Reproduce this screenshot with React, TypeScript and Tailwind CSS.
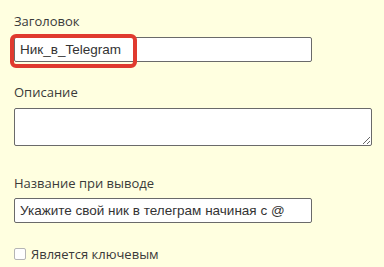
import React from "react";

export default function App() {
  const label = "block h-[16px] leading-[16px] text-[13px] text-[#3a3a3a] font-['Open_Sans',sans-serif]";
  const field =
    "block w-[298px] h-[25px] border border-[#6a6a6a] rounded-[2px] bg-white pl-[5px] pr-[4px] text-[13.5px] text-[#333] font-['Liberation_Sans',Arial,sans-serif] outline-none";
  return (
    <div className="w-[384px] h-[267px] bg-[#ffffe0] pl-[14px] pt-[13px] overflow-hidden">
      <label className={label}>Заголовок</label>
      <div className="relative mt-[8px]">
        <input className={field} defaultValue="Ник_в_Telegram" />
        <div className="absolute left-[-4px] top-[-3px] w-[127px] h-[34px] border-[4px] border-[#e03a2f] rounded-[6px] pointer-events-none" />
      </div>
      <label className={label + " mt-[22px]"}>Описание</label>
      <textarea className="block mt-[8px] w-[358px] h-[38px] border border-[#6a6a6a] rounded-[2px] bg-white outline-none" />
      <label className={label + " mt-[29px]"}>Название при выводе</label>
      <input
        className={field + " mt-[7px] w-[297px]"}
        defaultValue="Укажите свой ник в телеграм начиная с @"
      />
      <div className="mt-[25px] flex items-center gap-[5px] h-[12px]">
        <span className="block w-[12px] h-[12px] border border-[#b5b5b5] rounded-[2px] bg-white" />
        <span className="text-[13px] leading-[16px] text-[#3a3a3a] font-['Open_Sans',sans-serif]">Является ключевым</span>
      </div>
    </div>
  );
}
